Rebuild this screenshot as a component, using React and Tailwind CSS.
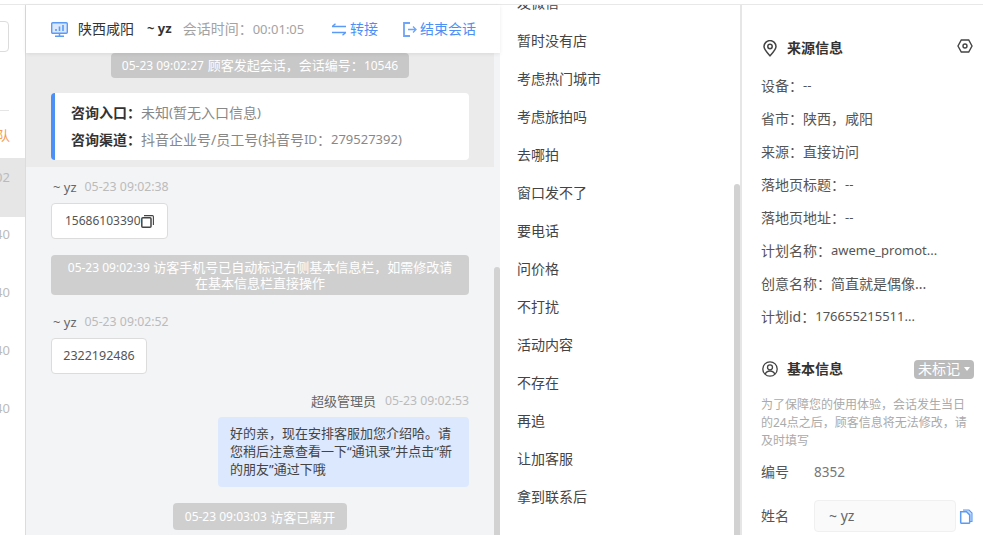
const font = { fontFamily: '"Noto Sans", "Noto Sans CJK SC", sans-serif' };

function Sys({ children, className = "" }) {
  return (
    <div className={`rounded-sm bg-[#cfcfcf] text-center text-[13px] leading-[14px] text-white ${className}`}>
      {children}
    </div>
  );
}

function Stamp({ children }) {
  return <span className="text-xs">{children}</span>;
}

function Who({ name, time }) {
  return (
    <div className="flex items-center gap-2 px-0.5 text-[13px] leading-4">
      <span className="text-[#666]">{name}</span>
      <span className="text-[12.3px] text-[#bbb]">{time}</span>
    </div>
  );
}

const listItems = ["暂时没有店", "考虑热门城市", "考虑旅拍吗", "去哪拍", "窗口发不了", "要电话", "问价格", "不打扰", "活动内容", "不存在", "再追", "让加客服", "拿到联系后"];
const sourceRows = [
  ["设备：", "--"],
  ["省市：", "陕西，咸阳"],
  ["来源：", "直接访问"],
  ["落地页标题：", "--"],
  ["落地页地址：", "--"],
  ["计划名称：", "aweme_promot..."],
  ["创意名称：", "简直就是偶像..."],
  ["计划id：", "176655215511..."],
];

export default function App() {
  return (
    <div style={font} className="flex h-[535px] w-[983px] flex-col overflow-hidden bg-white">
      <div className="h-[5px] shrink-0 border-b border-[#e8e8e8]" />
      <div className="flex min-h-0 flex-1">
        {/* left rail */}
        <div className="flex w-[26px] shrink-0 flex-col overflow-hidden border-r border-[#dcdcdc]">
          <div className="mt-4 ml-[-20px] h-[31px] w-[29px] shrink-0 rounded border border-[#dcdcdc]" />
          <div className="mt-[58px] h-px w-[9px] shrink-0 bg-[#e5e5e5]" />
          <div className="mt-[16px] h-4 shrink-0 text-[13px] leading-4 text-[#f59a52]">
            <span className="ml-[-3px]">队</span>
          </div>
          <div className="mt-[15px] flex h-[59px] shrink-0 items-start bg-[#e6e6e6] pt-[11px] text-[13px] leading-4 text-[#bbb]">
            <span className="ml-[-5px]">02</span>
          </div>
          {[0, 1, 2, 3].map((i) => (
            <div key={i} className="flex h-[58px] shrink-0 items-start pt-[9px] text-[13px] leading-4 text-[#bbb]">
              <span className="ml-[-5px]">40</span>
            </div>
          ))}
        </div>

        {/* chat */}
        <div className="relative flex w-[474px] shrink-0 flex-col bg-[#f3f4f6]">
          <div className="relative z-10 flex h-[48px] shrink-0 items-center bg-white pl-[25px] pr-[24px] shadow-[0_1px_4px_rgba(0,0,0,0.08)]">
            <svg width="17" height="15" viewBox="0 0 17 15" fill="none" className="shrink-0">
              <rect x="0.7" y="0.7" width="15.6" height="10.6" rx="1" fill="#dbe8fd" stroke="#5b9bf5" strokeWidth="1.4" />
              <path d="M8.5 11.5V14M4 14.2h9" stroke="#5b9bf5" strokeWidth="1.5" />
              <path d="M5 9V7M8.5 9V4.5M12 9V3" stroke="#5b9bf5" strokeWidth="1.6" />
            </svg>
            <span className="ml-[10px] text-sm text-[#333]">陕西咸阳</span>
            <span className="ml-[13px] text-[13px] font-bold text-[#333]">~ yz</span>
            <span className="ml-[11px] text-sm text-[#a3a3a3]">
              会话时间：<span className="text-[13px]">00:01:05</span>
            </span>
            <span className="ml-auto flex items-center gap-[3px] text-sm text-[#4d90f5]">
              <svg width="16" height="13" viewBox="0 0 16 13" fill="none" stroke="#5b9bf5" strokeWidth="1.4">
                <path d="M1 3.5h14M4.5 0.7 1.2 3.5M15 9.5H1M11.5 12.3l3.3-2.8" />
              </svg>
              转接
            </span>
            <span className="ml-[25px] flex items-center gap-[3px] text-sm text-[#4d90f5]">
              <svg width="14" height="15" viewBox="0 0 14 15" fill="none" stroke="#6ea5f6" strokeWidth="1.3">
                <path d="M7 1H1v13h6" strokeWidth="1.8" />
                <path d="M5 7.5h8M10 4.5l3 3-3 3" />
              </svg>
              结束会话
            </span>
          </div>

          <div className="min-h-0 flex-1 overflow-hidden">
            <div className="w-[468px] bg-[#ebebeb] pb-[7px]">
              <div className="mx-auto flex h-[25px] w-[298px] items-center justify-center gap-1 rounded-sm bg-[#c8c8c8] text-[13px] text-white">
                <Stamp>05-23 09:02:27</Stamp>
                <span>
                  顾客发起会话，会话编号：<Stamp>10546</Stamp>
                </span>
              </div>
              <div className="mx-[25px] mt-[15px] h-[67px] w-[418px] rounded-sm border-l-4 border-[#4d90f5] bg-white pl-4 pt-[6px] text-sm text-[#888]">
                <div className="flex h-[27px] items-center whitespace-nowrap">
                  <b className="font-bold text-[#333]">咨询入口：</b>未知<span className="text-[13px]">(</span>暂无入口信息<span className="text-[13px]">)</span>
                </div>
                <div className="flex h-[27px] items-center whitespace-nowrap">
                  <b className="font-bold text-[#333]">咨询渠道：</b>抖音企业号/员工号<span className="text-[13px]">(</span>抖音号<span className="text-[12px]">ID</span>：<span className="text-[13px]">279527392)</span>
                </div>
              </div>
            </div>

            <div className="ml-[25px] w-[418px]">
              <div className="mt-3">
                <Who name="~ yz" time="05-23 09:02:38" />
              </div>
              <div className="mt-2 flex h-9 w-[117px] items-center rounded border border-[#dcdcdc] bg-white pl-[13px] text-xs text-[#555]">
                15686103390
                <svg width="13" height="13" viewBox="0 0 13 13" fill="none" stroke="#444" className="shrink-0">
                  <rect x="0.8" y="2.8" width="9.2" height="9.4" rx="1" strokeWidth="1.5" />
                  <path d="M3 .6h8.4a1 1 0 0 1 1 1V10" strokeWidth="1.1" />
                </svg>
              </div>
              <Sys className="mt-4 flex h-10 flex-col justify-center px-3">
                <div>
                  <Stamp>05-23 09:02:39</Stamp> 访客手机号已自动标记右侧基本信息栏，如需修改请
                </div>
                <div>在基本信息栏直接操作</div>
              </Sys>
              <div className="mt-[19px]">
                <Who name="~ yz" time="05-23 09:02:52" />
              </div>
              <div className="mt-2 flex h-9 w-24 items-center justify-center rounded border border-[#dcdcdc] bg-white text-[12.5px] text-[#555]">
                2322192486
              </div>
              <div className="mt-[19px] flex justify-end gap-[9px] text-[13px] leading-4">
                <span className="text-[#666]">超级管理员</span>
                <span className="text-[12.3px] text-[#bbb]">05-23 09:02:53</span>
              </div>
              <div className="ml-auto mt-2 h-[70px] w-[251px] rounded bg-[#dce8fd] px-3 pt-[7px] text-[13px] leading-[18px] text-[#444]">
                好的亲，现在安排客服加您介绍哈。请您稍后注意查看一下“通讯录”并点击“新的朋友”通过下哦
              </div>
              <Sys className="mx-auto mt-4 flex h-[27px] w-[174px] items-center justify-center">
                <Stamp>05-23 09:03:03</Stamp>&nbsp;访客已离开
              </Sys>
            </div>
          </div>
          <div className="absolute bottom-0 right-0 top-[262px] w-[6px] rounded-t bg-[#d2d2d2]" />
        </div>

        {/* phrase list */}
        <div className="relative w-[242px] shrink-0 overflow-hidden border-r-2 border-[#e6e6e6] pl-[17px]">
          <div className="mt-[-21px] text-sm leading-[38px] text-[#444]">
            <div>发微信</div>
            {listItems.map((t) => (
              <div key={t}>{t}</div>
            ))}
          </div>
          <div className="absolute bottom-0 right-0 top-[179px] w-[6px] rounded-t bg-[#d2d2d2]" />
        </div>

        {/* right */}
        <div className="min-w-0 flex-1 overflow-hidden pl-[19px] pr-[9px] text-[13px] text-[#555]">
          <div className="mt-[33px] flex h-5 items-center justify-between">
            <div className="flex items-center">
              <svg width="14" height="17" viewBox="0 0 14 17" fill="none" stroke="#444" strokeWidth="1.5" className="ml-[2px]">
                <path d="M7 15.8C4 12.6 1 9.6 1 6.6a6 6 0 0 1 12 0c0 3-3 6-6 9.2Z" />
                <circle cx="7" cy="6.5" r="2.2" />
              </svg>
              <span className="ml-[10px] text-sm font-bold text-[#333]">来源信息</span>
            </div>
            <svg width="16" height="14" viewBox="0 0 16 14" fill="none" stroke="#444" strokeWidth="1.4" className="mb-1 mr-[1px]">
              <path d="M4.3 1h7.4L15 7l-3.3 6H4.3L1 7Z" />
              <circle cx="8" cy="7" r="2" />
            </svg>
          </div>
          <div className="mt-[11px]">
            {sourceRows.map(([k, v]) => (
              <div key={k} className="flex h-[33px] items-center whitespace-nowrap">
                <span className="text-sm">{k}</span>
                <span className={/[\u4e00-\u9fa5]/.test(v) ? "text-sm" : "text-[13px]"}>{v}</span>
              </div>
            ))}
          </div>
          <div className="mt-[26px] flex h-5 items-center justify-between">
            <div className="flex items-center">
              <svg width="16" height="16" viewBox="0 0 16 16" fill="none" stroke="#444" strokeWidth="1.3" className="ml-px">
                <circle cx="8" cy="8" r="7.2" />
                <circle cx="8" cy="6.3" r="2.5" />
                <path d="M3.2 13.2c.8-2.2 2.6-3.2 4.8-3.2s4 1 4.8 3.2" />
              </svg>
              <span className="ml-[9px] text-sm font-bold text-[#333]">基本信息</span>
            </div>
            <span className="flex h-[19px] w-[60px] items-center justify-center gap-1 rounded-sm bg-[#bbb] text-sm text-white">
              未标记
              <span className="h-0 w-0 border-x-[3.5px] border-t-4 border-x-transparent border-t-white" />
            </span>
          </div>
          <div className="mt-[17px] text-xs leading-[18px] text-[#aaa]">
            为了保障您的使用体验，会话发生当日的24点之后，顾客信息将无法修改，请及时填写
          </div>
          <div className="mt-[12px] flex h-5 items-center">
            <span className="w-[53px] text-sm">编号</span>
            <span className="text-[13.5px] text-[#777]">8352</span>
          </div>
          <div className="mt-[18px] flex items-center">
            <span className="w-[53px] text-sm">姓名</span>
            <span className="flex h-8 w-[142px] items-center rounded-sm border border-[#f0f0f0] bg-[#fafafa] pl-[14px] text-sm text-[#666]">~ yz</span>
            <svg width="14" height="15" viewBox="0 0 14 15" fill="none" stroke="#5b9bf5" className="ml-[3px]">
              <path d="M4 1h6l3 3v8.5h-2" strokeWidth="1.1" fill="#cfe0fb" />
              <path d="M1.7 2.7h5.8l3.2 3.2v7.4a1 1 0 0 1-1 1H2.7a1 1 0 0 1-1-1Z" fill="#fff" strokeWidth="1.5" />
            </svg>
          </div>
        </div>
      </div>
    </div>
  );
}
